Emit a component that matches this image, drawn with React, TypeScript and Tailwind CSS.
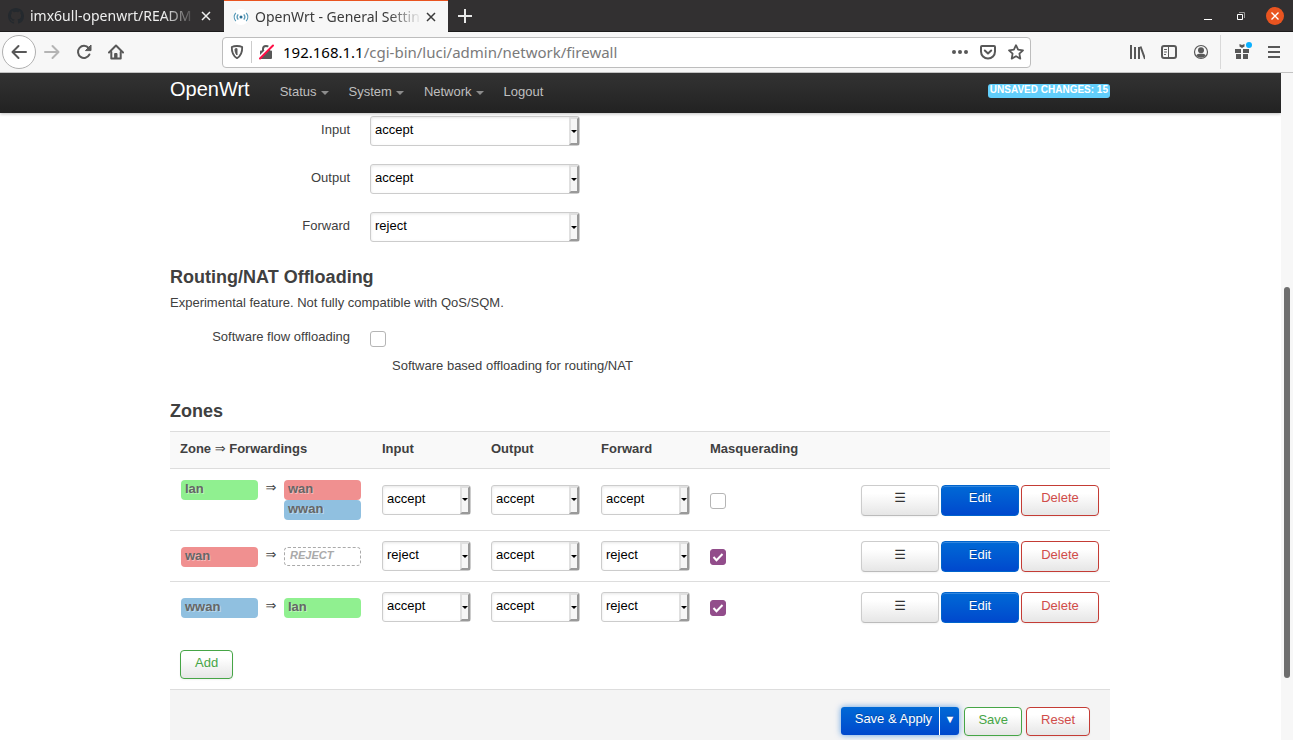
import type { ReactNode } from "react";

const OPTIONS = ["accept", "reject", "drop"];

type ZoneName = "lan" | "wan" | "wwan";

const zoneColors: Record<ZoneName, string> = {
  lan: "bg-[#90f090]",
  wan: "bg-[#f09090]",
  wwan: "bg-[#90c0e0]",
};

const zones: {
  name: ZoneName;
  targets: ZoneName[];
  input: string;
  output: string;
  forward: string;
  masq: boolean;
}[] = [
  { name: "lan", targets: ["wan", "wwan"], input: "accept", output: "accept", forward: "accept", masq: false },
  { name: "wan", targets: [], input: "reject", output: "accept", forward: "reject", masq: true },
  { name: "wwan", targets: ["lan"], input: "accept", output: "accept", forward: "reject", masq: true },
];

const plainButton =
  "rounded border bg-linear-to-b from-white from-25% to-[#e6e6e6] pb-1 text-center leading-[18px] shadow-[0_1px_2px_rgba(0,0,0,0.05)]";
const greenButton = "border-[#46a546] text-[#46a546]";
const redButton = "border-[#c43c35] text-[#d04c4a]";
const blueButton =
  "bg-linear-to-b from-[#0069d6] to-[#0048cd] text-white leading-[18px] pb-1 [text-shadow:0_-1px_0_rgba(0,0,0,0.25)]";

/* Browser window */

function CloseIcon() {
  return (
    <svg width="10" height="10" viewBox="0 0 10 10" fill="none" stroke="currentColor" strokeWidth="1.5">
      <path d="M1 1l8 8M9 1L1 9" />
    </svg>
  );
}

function Tab({ title, icon, active }: { title: string; icon: ReactNode; active?: boolean }) {
  return (
    <div
      className={
        active
          ? "flex w-[224px] items-center border-t border-[#e95420] bg-[#f7f7f7] pl-2 text-[#3a3a3a]"
          : "flex w-[224px] items-center border-b border-[#1c1b1b] pl-2 text-[#eeeeee]"
      }
    >
      {icon}
      <a
        href="#"
        className="ml-1.5 w-[167px] whitespace-nowrap text-[14px] leading-5 [mask-image:linear-gradient(to_right,black_80%,transparent)]"
      >
        {title}
      </a>
      <button aria-label="Close tab" className="ml-1">
        <CloseIcon />
      </button>
    </div>
  );
}

function TabStrip() {
  return (
    <div className="flex h-8 shrink-0 bg-[#323031]">
      <Tab
        title="imx6ull-openwrt/READM"
        icon={
          <svg width="16" height="16" viewBox="0 0 16 16" fill="#24292e">
            <path d="M8 0C3.58 0 0 3.58 0 8c0 3.54 2.29 6.53 5.47 7.59.4.07.55-.17.55-.38v-1.49c-2.01.37-2.53-.49-2.69-.94-.09-.23-.48-.94-.82-1.13-.28-.15-.68-.52-.01-.53.63-.01 1.08.58 1.23.82.72 1.21 1.87.87 2.33.66.07-.52.28-.87.51-1.07-1.78-.2-3.64-.89-3.64-3.95 0-.87.31-1.59.82-2.15-.08-.2-.36-1.02.08-2.12 0 0 .67-.21 2.2.82a7.4 7.4 0 014 0c1.53-1.04 2.2-.82 2.2-.82.44 1.1.16 1.92.08 2.12.51.56.82 1.27.82 2.15 0 3.07-1.87 3.75-3.65 3.95.29.25.54.73.54 1.48v2.2c0 .21.15.46.55.38A8 8 0 0016 8c0-4.42-3.58-8-8-8z" />
          </svg>
        }
      />
      <Tab
        active
        title="OpenWrt - General Settin"
        icon={
          <svg className="ml-px" width="16" height="16" viewBox="0 0 16 16" fill="none" stroke="#5b9bb8" strokeWidth="1.3">
            <circle cx="8" cy="8" r="8" fill="#fff" stroke="none" />
            <circle cx="8" cy="8" r="1.5" fill="#2a6f96" stroke="none" />
            <path d="M5.2 5.4a4 4 0 000 5.2M10.8 5.4a4 4 0 010 5.2M2.8 3.8a6.5 6.5 0 000 8.400M13.2 3.8a6.5 6.5 0 010 8.400" />
          </svg>
        }
      />
      <div className="flex grow items-center border-b border-[#1c1b1b] pr-[9px] text-white">
        <button aria-label="New tab" className="ml-2.5">
          <svg width="14" height="14" viewBox="0 0 14 14" stroke="#e8e8e8" strokeWidth="2">
            <path d="M7 0v14M0 7h14" />
          </svg>
        </button>
        <div className="ml-auto flex items-center gap-[25px]">
          <button aria-label="Minimize">
            <svg width="8" height="10" viewBox="0 0 8 10" stroke="#fff">
              <path d="M0 8.5h8" />
            </svg>
          </button>
          <button aria-label="Restore">
            <svg width="8" height="8" viewBox="0 0 8 8" fill="none">
              <path d="M2 .5h5.5V6" stroke="#999" />
              <path d="M.5 2.5h5v5h-5z" stroke="#fff" />
            </svg>
          </button>
          <button aria-label="Close" className="-ml-1 flex size-[18px] items-center justify-center rounded-full bg-[#e95420]">
            <svg width="8" height="8" viewBox="0 0 8 8" stroke="#fff" strokeWidth="1.4">
              <path d="M.5.5l7 7M7.5.5l-7 7" />
            </svg>
          </button>
        </div>
      </div>
    </div>
  );
}

function ToolIcon({ label, children, className }: { label: string; children: ReactNode; className?: string }) {
  return (
    <button aria-label={label} className={className}>
      <svg width="16" height="16" viewBox="0 0 16 16" fill="none" stroke="currentColor" strokeWidth="2" strokeLinecap="round" strokeLinejoin="round">
        {children}
      </svg>
    </button>
  );
}

function Toolbar() {
  return (
    <div className="flex h-[41px] shrink-0 items-center border-b border-[#c2c2c2] bg-[#f7f7f7] pl-0.5 pr-[11px] text-[#585858]">
      <ToolIcon label="Back" className="flex size-[34px] items-center justify-center rounded-full border border-[#b0b0b0] bg-white">
        <path d="M15 8H2M7.5 2L1.5 8l6 6" />
      </ToolIcon>
      <ToolIcon label="Forward" className="ml-2 text-[#b4b4b4]">
        <path d="M1 8h13M8.5 2l6 6-6 6" />
      </ToolIcon>
      <ToolIcon label="Reload" className="ml-4">
        <path d="M13.400 10.500A6 6 0 1112.600 4" />
        <path d="M15 1.400v5.200H9.800z" fill="currentColor" strokeWidth="1" />
      </ToolIcon>
      <ToolIcon label="Home" className="ml-4">
        <path d="M1 8.500l7-7 7 7" />
        <path d="M3.300 8v6.500h9.400V8" />
        <path d="M7 9.500h2v5H7z" fill="currentColor" strokeWidth="1" />
      </ToolIcon>

      <div className="ml-[98px] flex h-[31px] grow items-center rounded-[4px] border border-[#bdbdbd] bg-white px-1.5">
        <ToolIcon label="Tracking protection">
          <path d="M8 2c2 0 3.600.2 5.200 1 .2 5.200-1 8.700-5.200 11.200C3.800 11.700 2.600 8.200 2.800 3 4.400 2.200 6 2 8 2z" strokeWidth="1.800" />
          <path d="M8 5v6C6.600 9.600 6 7.800 6 5.300z" fill="currentColor" strokeWidth="1" />
        </ToolIcon>
        <span className="ml-1.5 h-[22px] w-px bg-[#cccccc]" />
        <ToolIcon label="Connection not secure" className="ml-1.5">
          <path d="M3 7.500h10V14H3z" fill="currentColor" />
          <path d="M5 7V5a3 3 0 016 0v2" />
          <path d="M1 14L14 1" stroke="#fff" strokeWidth="3" />
          <path d="M2 14.500L15 1.500" stroke="#ff0f45" />
        </ToolIcon>
        <label className="ml-[9px] flex grow items-center text-[15px] leading-5">
          <span className="text-black">192.168.1.1</span>
          <input
            aria-label="Address"
            defaultValue="/cgi-bin/luci/admin/network/firewall"
            className="min-w-0 grow bg-transparent text-[#7a7a7a] outline-none"
          />
        </label>
        <div className="flex gap-3">
          <ToolIcon label="Page actions">
            <g fill="currentColor" stroke="none">
              <circle cx="2" cy="8" r="2" />
              <circle cx="8" cy="8" r="2" />
              <circle cx="14" cy="8" r="2" />
            </g>
          </ToolIcon>
          <ToolIcon label="Save to Pocket">
            <path d="M2 2h12a1 1 0 011 1v4.500a7 7 0 01-14 0V3a1 1 0 011-1z" />
            <path d="M4.800 6.500L8 9.500l3.200-3" />
          </ToolIcon>
          <ToolIcon label="Bookmark">
            <path d="M8 1.200l2.100 4.500 4.900.6-3.600 3.400.9 4.900L8 12.200l-4.300 2.400.9-4.900L1 6.300l4.900-.6z" strokeWidth="1.800" />
          </ToolIcon>
        </div>
      </div>

      <div className="ml-[98px] flex items-center gap-4">
        <ToolIcon label="Library">
          <path d="M2 1v14M6 3v12M10 3v12M11.500 2.500L16 15" strokeLinecap="butt" />
        </ToolIcon>
        <ToolIcon label="Sidebars">
          <rect x="1" y="2" width="14" height="12" rx="2" />
          <path d="M7.500 2v12M3.500 5.500h2M3.500 8h2M3.500 10.500h1" strokeWidth="1" />
        </ToolIcon>
        <ToolIcon label="Account">
          <circle cx="8" cy="8" r="6.500" strokeWidth="1.200" />
          <circle cx="8" cy="6.300" r="3" fill="currentColor" stroke="none" />
          <path d="M3.200 11.500c1-1.700 2.300-1.700 4.800-1.700s3.800 0 4.800 1.700C11.500 13 10 13.700 8 13.700s-3.500-.7-4.800-2.200z" fill="currentColor" stroke="none" />
        </ToolIcon>
      </div>
      <span className="ml-[11px] h-[34px] w-px bg-[#d9d9d9]" />
      <button aria-label="What's new" className="relative ml-[13px]">
        <svg width="16" height="16" viewBox="0 0 16 16" fill="currentColor">
          <path d="M1 5h6v4H1zM9 5h6v4H9zM2 10h5v5H2zM9 10h5v5H9zM5.500 0L8 1l2.500-1v2.500L8 4 5.500 2.500z" />
        </svg>
        <span className="absolute -right-0.5 -top-0.5 size-1.5 rounded-full bg-[#0ab0ff]" />
      </button>
      <ToolIcon label="Menu" className="ml-4">
        <path d="M2 3h12M2 8h12M2 13h12" strokeLinecap="butt" />
      </ToolIcon>
    </div>
  );
}

/* LuCI page */

function NavItem({ label, menu }: { label: string; menu?: boolean }) {
  return (
    <li>
      <a href="#" className="flex items-center gap-1 px-2.5 text-[#bfbfbf]">
        {label}
        {menu && (
          <svg className="mt-0.5" width="8" height="4" viewBox="0 0 8 4" fill="#8c8c8c">
            <path d="M0 0h8L4 4z" />
          </svg>
        )}
      </a>
    </li>
  );
}

function Header() {
  return (
    <header className="relative h-10 shrink-0 bg-linear-to-b from-[#333333] to-[#222222] pr-px shadow-[0_1px_3px_rgba(0,0,0,0.25)]">
      <div className="mx-auto flex w-full max-w-[940px] items-center">
        <a href="#" className="py-0.5 text-[20px] leading-7 text-white">
          OpenWrt
        </a>
        <ul className="ml-5 mt-1.5 flex">
          <NavItem label="Status" menu />
          <NavItem label="System" menu />
          <NavItem label="Network" menu />
          <NavItem label="Logout" />
        </ul>
        <a
          href="#"
          className="ml-auto mt-1 rounded-[3px] bg-[#62cffc] px-0.5 pb-0.5 text-[10px] font-bold leading-3 text-white"
        >
          UNSAVED CHANGES: 15
        </a>
      </div>
    </header>
  );
}

function Select({ id, label, value, wide }: { id?: string; label?: string; value: string; wide?: boolean }) {
  return (
    <div
      className={`${wide ? "w-[210px]" : "w-[89px]"} mb-px flex h-[30px] rounded-[3px] border border-[#cccccc] bg-white shadow-[inset_0_1px_3px_rgba(0,0,0,0.1)]`}
    >
      <select
        id={id}
        aria-label={label}
        defaultValue={value}
        className="min-w-0 grow appearance-none bg-transparent pb-0.5 pl-1 text-black outline-none"
      >
        {OPTIONS.map((option) => (
          <option key={option}>{option}</option>
        ))}
      </select>
      <span className="pointer-events-none flex w-[10px] items-center justify-center border-2 border-b-[#999999] border-l-[#e0e0e0] border-r-[#999999] border-t-[#e0e0e0] bg-[#f6f6f6]">
        <svg className="shrink-0" width="6" height="3" viewBox="0 0 6 3">
          <path d="M0 0h6L3 3z" />
        </svg>
      </span>
    </div>
  );
}

function Checkbox({ id, label, checked }: { id?: string; label?: string; checked?: boolean }) {
  return (
    <span className="mt-px grid size-4 place-items-center">
      <input
        id={id}
        aria-label={label}
        type="checkbox"
        defaultChecked={checked}
        className="peer col-start-1 row-start-1 size-4 appearance-none rounded-[3px] border border-[#b5b5b5] bg-white checked:border-[#924d8b] checked:bg-[#924d8b]"
      />
      <svg
        className="pointer-events-none invisible col-start-1 row-start-1 peer-checked:visible"
        width="12"
        height="12"
        viewBox="0 0 12 12"
        fill="none"
        stroke="#fff"
        strokeWidth="2"
      >
        <path d="M1.500 6l3 3.200L10.500 3" />
      </svg>
    </span>
  );
}

function PolicyRow({ label, value }: { label: string; value: string }) {
  const id = `default-${label.toLowerCase()}`;
  return (
    <div className="mb-[17px] flex gap-5">
      <label htmlFor={id} className="w-[180px] pt-[5px] text-right">
        {label}
      </label>
      <Select id={id} value={value} wide />
    </div>
  );
}

function ZoneBadge({ name }: { name: ZoneName }) {
  return (
    <span
      className={`${zoneColors[name]} block h-5 rounded px-1 font-bold leading-[18px] text-[#666666] [text-shadow:1px_1px_0_rgba(255,255,255,0.4)]`}
    >
      {name}
    </span>
  );
}

function ZonesTable() {
  const cell = "border-b border-[#dddddd] px-2.5 pt-2.5 pb-[9px] align-middle";
  const heading = "border-y border-[#dddddd] bg-[#f9f9f9] px-2.5 pt-2 pb-2.5 text-left font-bold";

  return (
    <table className="w-full table-fixed border-separate border-spacing-0">
      <colgroup>
        <col className="w-[202px]" />
        <col className="w-[109px]" />
        <col className="w-[110px]" />
        <col className="w-[109px]" />
        <col />
        <col className="w-[259px]" />
      </colgroup>
      <thead>
        <tr>
          <th className={heading}>
            Zone <span className="font-normal">⇒</span> Forwardings
          </th>
          <th className={heading}>Input</th>
          <th className={heading}>Output</th>
          <th className={heading}>Forward</th>
          <th className={heading}>Masquerading</th>
          <th className={heading} aria-label="Actions" />
        </tr>
      </thead>
      <tbody className="[&>tr:last-child>td]:border-transparent">
        {zones.map((zone) => (
          <tr key={zone.name}>
            <td className={cell}>
              <div className="flex items-start px-px py-px">
                <div className="w-[77px]">
                  <ZoneBadge name={zone.name} />
                </div>
                <span className="w-[26px] text-center leading-4">⇒</span>
                <div className="w-[77px]">
                  {zone.targets.map((target) => (
                    <ZoneBadge key={target} name={target} />
                  ))}
                  {zone.targets.length === 0 && (
                    <span className="block h-[19px] rounded border border-dashed border-[#aaaaaa] px-[5px] text-[11px] font-bold italic leading-[14px] text-[#aaaaaa]">
                      REJECT
                    </span>
                  )}
                </div>
              </div>
            </td>
            <td className={cell}>
              <Select label={`${zone.name} input`} value={zone.input} />
            </td>
            <td className={cell}>
              <Select label={`${zone.name} output`} value={zone.output} />
            </td>
            <td className={cell}>
              <Select label={`${zone.name} forward`} value={zone.forward} />
            </td>
            <td className={cell}>
              <Checkbox label={`${zone.name} masquerading`} checked={zone.masq} />
            </td>
            <td className={cell}>
              <div className="flex justify-end gap-0.5 pr-px">
                <button
                  aria-label="Drag to reorder"
                  className={`${plainButton} h-[31px] w-[78px] border-[#cccccc] border-b-[#bbbbbb] text-[#333333]`}
                >
                  ☰
                </button>
                <button
                  className={`${blueButton} h-[31px] w-[78px] rounded border border-[#0064cd] shadow-[inset_0_1px_0_rgba(255,255,255,0.2)]`}
                >
                  Edit
                </button>
                <button className={`${plainButton} ${redButton} h-[31px] w-[78px]`}>Delete</button>
              </div>
            </td>
          </tr>
        ))}
      </tbody>
    </table>
  );
}

function PageActions() {
  return (
    <div className="mt-2.5 flex justify-end gap-1 border-t border-[#dddddd] bg-[#f4f4f4] px-5 pb-[18px] pt-[17px]">
      <div className="mr-px flex h-7 rounded-[3px] shadow-[0_0_6px_rgba(0,105,214,0.6)]">
        <button className={`${blueButton} w-[99px] rounded-l-[3px] border-r border-white pl-1.5`}>Save &amp; Apply</button>
        <button aria-label="More apply options" className={`${blueButton} w-[19px] rounded-r-[3px] text-[11px]`}>
          ▼
        </button>
      </div>
      <button className={`${plainButton} ${greenButton} h-[29px] px-[13px]`}>Save</button>
      <button className={`${plainButton} ${redButton} h-[29px] px-3.5`}>Reset</button>
    </div>
  );
}

export default function App() {
  return (
    <div className="flex h-screen flex-col overflow-hidden bg-white font-['Noto_Sans',sans-serif]">
      <TabStrip />
      <Toolbar />
      <div className="flex min-h-0 grow">
        <div className="flex min-w-0 grow flex-col overflow-hidden font-['Liberation_Sans','DejaVu_Sans',sans-serif] text-[13px] leading-[18px] text-[#404040]">
          <Header />
          <main className="pr-px pt-[3px]">
            <div className="mx-auto w-full max-w-[940px]">
              <PolicyRow label="Input" value="accept" />
              <PolicyRow label="Output" value="accept" />
              <PolicyRow label="Forward" value="reject" />

              <h3 className="text-[18px] font-bold leading-[34px]">Routing/NAT Offloading</h3>
              <p>Experimental feature. Not fully compatible with QoS/SQM.</p>
              <div className="mt-4 flex gap-5">
                <label htmlFor="flow-offloading" className="w-[180px] text-right">
                  Software flow offloading
                </label>
                <div className="pt-0.5">
                  <Checkbox id="flow-offloading" />
                  <p className="ml-[22px] mt-2.5">Software based offloading for routing/NAT</p>
                </div>
              </div>

              <h3 className="mb-[3px] mt-[19px] text-[18px] font-bold leading-[34px]">Zones</h3>
              <ZonesTable />
              <button className={`${plainButton} ${greenButton} ml-2.5 mt-[17px] block h-[29px] px-3.5`}>Add</button>
              <PageActions />
            </div>
          </main>
        </div>

        {/* Scrollbar */}
        <div className="flex w-3 shrink-0 flex-col bg-[#f7f7f7] px-[3px]">
          <div className="grow-[214]" />
          <div className="grow-[391] rounded-full bg-[#6e6e6e]" />
          <div className="grow-[62]" />
        </div>
      </div>
    </div>
  );
}
